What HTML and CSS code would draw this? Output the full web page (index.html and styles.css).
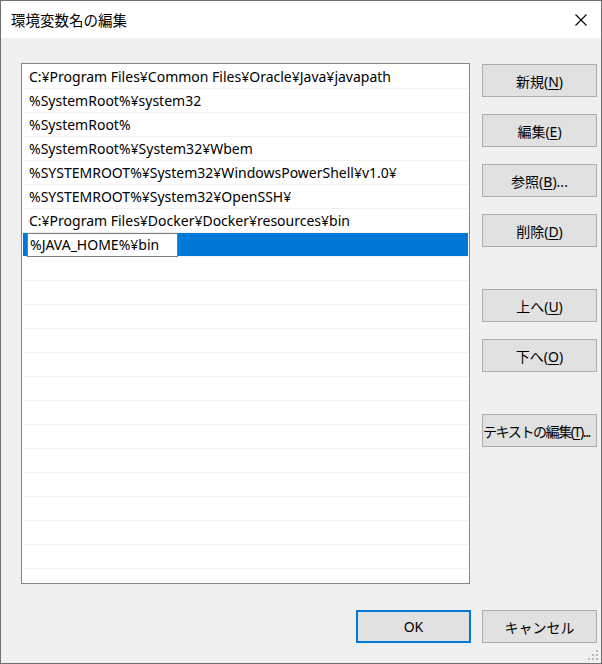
FILE: index.html
```html
<!DOCTYPE html>
<html lang="ja">
  <head>
    <meta charset="UTF-8" />
    <meta name="viewport" content="width=device-width, initial-scale=1.0" />
    <title>環境変数名の編集</title>
    <link rel="stylesheet" href="styles.css">
  </head>
  <body>
    <div class="window">
      <div class="title-bar">
        <span class="title">環境変数名の編集</span>
        <span class="close">
          <svg width="12" height="12" viewBox="0 0 12 12">
            <path d="M0.5 0.5 L11.5 11.5 M11.5 0.5 L0.5 11.5" stroke="#000" stroke-width="1.1" fill="none" />
          </svg>
        </span>
      </div>

      <div class="content">
        <div class="main-row">
          <div class="path-list">
            <div class="row">C:¥Program Files¥Common Files¥Oracle¥Java¥javapath</div>
            <div class="row">%SystemRoot%¥system32</div>
            <div class="row">%SystemRoot%</div>
            <div class="row">%SystemRoot%¥System32¥Wbem</div>
            <div class="row">%SYSTEMROOT%¥System32¥WindowsPowerShell¥v1.0¥</div>
            <div class="row">%SYSTEMROOT%¥System32¥OpenSSH¥</div>
            <div class="row">C:¥Program Files¥Docker¥Docker¥resources¥bin</div>
            <div class="row selected">
              <span class="edit-box">%JAVA_HOME%¥bin</span>
            </div>
            <div class="row"></div>
            <div class="row"></div>
            <div class="row"></div>
            <div class="row"></div>
            <div class="row"></div>
            <div class="row"></div>
            <div class="row"></div>
            <div class="row"></div>
            <div class="row"></div>
            <div class="row"></div>
            <div class="row"></div>
            <div class="row"></div>
            <div class="row"></div>
            <div class="row"></div>
          </div>

          <div class="side-buttons">
            <button>新規(<u>N</u>)</button>
            <button>編集(<u>E</u>)</button>
            <button>参照(<u>B</u>)...</button>
            <button>削除(<u>D</u>)</button>
            <button class="group-start">上へ(<u>U</u>)</button>
            <button>下へ(<u>O</u>)</button>
            <button class="group-start narrow">テキストの編集(<u>T</u>)...</button>
          </div>
        </div>

        <div class="footer">
          <button class="default">OK</button>
          <button>キャンセル</button>
        </div>
      </div>

      <div class="grip">
        <svg width="11" height="11" viewBox="0 0 11 11">
          <rect x="8" y="0" width="2" height="2" fill="#b8b8b8" />
          <rect x="4" y="4" width="2" height="2" fill="#b8b8b8" />
          <rect x="8" y="4" width="2" height="2" fill="#b8b8b8" />
          <rect x="0" y="8" width="2" height="2" fill="#b8b8b8" />
          <rect x="4" y="8" width="2" height="2" fill="#b8b8b8" />
          <rect x="8" y="8" width="2" height="2" fill="#b8b8b8" />
        </svg>
      </div>
    </div>
  </body>
</html>
```

FILE: styles.css
```css
body {
  margin: 0;
  font-family: "Noto Sans", "Noto Sans CJK JP", sans-serif;
  font-size: 14px;
  color: #000;
  background-color: #ffffff;
}

.window {
  position: relative;
  width: 600px;
  height: 662px;
  border: 1px solid #707070;
  background-color: #f0f0f0;
  overflow: hidden;
}

.title-bar {
  height: 37px;
  background-color: #fff;
  display: flex;
  align-items: center;
  justify-content: space-between;
  padding: 0 14px 0 10px;
}

.title {
  font-family: "Noto Sans CJK JP", sans-serif;
  font-size: 14.5px;
  line-height: 20px;
  margin-top: 1px;
}

.close {
  display: flex;
  margin-top: 1px;
}

.content {
  padding: 25px 3px 0 20px;
}

.main-row {
  display: flex;
  gap: 12px;
}

.path-list {
  width: 445px;
  height: 518px;
  border: 1px solid #828790;
  background-color: #fff;
  padding: 1px 1px 0 1px;
  overflow: hidden;
}

.row {
  height: 23px;
  line-height: 23px;
  border-bottom: 1px solid #f0f0f0;
  padding-left: 6px;
  white-space: nowrap;
}

.row.selected {
  background-color: #0078d7;
  padding-left: 4px;
  display: flex;
}

.edit-box {
  width: 147px;
  height: 22px;
  line-height: 22px;
  background-color: #fff;
  border: 1px solid #7a7a7a;
  padding-left: 2px;
}

.side-buttons {
  display: flex;
  flex-direction: column;
  gap: 17px;
  padding-top: 1px;
}

button {
  width: 115px;
  height: 33px;
  padding: 0;
  font-family: "Noto Sans", "Noto Sans CJK JP", sans-serif;
  font-size: 14px;
  color: #000;
  background-color: #e1e1e1;
  border: 1px solid #adadad;
  border-radius: 0;
  white-space: nowrap;
}

button u {
  text-underline-offset: 2px;
}

.side-buttons .group-start {
  margin-top: 25px;
}

.side-buttons .narrow {
  letter-spacing: -1.4px;
  padding-right: 10px;
  overflow: visible;
}

.footer {
  display: flex;
  justify-content: flex-end;
  gap: 11px;
  margin-top: 26px;
  padding-right: 1px;
}

.footer .default {
  border: 2px solid #0078d7;
}

.grip {
  position: absolute;
  right: 2px;
  bottom: 2px;
  display: flex;
}
```
